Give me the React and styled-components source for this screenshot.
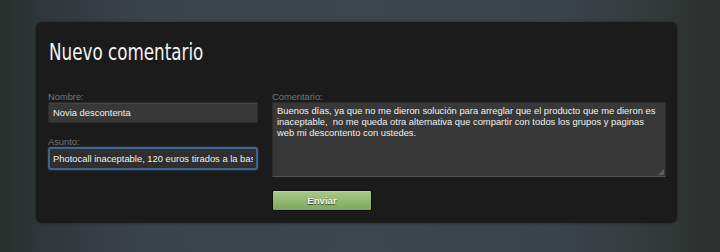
import React from 'react';
import styled, { createGlobalStyle } from 'styled-components';

const GlobalStyle = createGlobalStyle`
  html, body {
    margin: 0;
    padding: 0;
    width: 720px;
    height: 252px;
    overflow: hidden;
  }

  body {
    font-family: "Liberation Sans", Arial, sans-serif;
    background: linear-gradient(90deg, #2a2f2d 0%, #30373a 6%, #39434a 20%, #3b454c 50%, #39434a 78%, #343b3b 90%, #2b2f2d 100%);
  }
`;

const Page = styled.div`
  width: 720px;
  height: 252px;
  padding: 22px 43px 0 36px;
  box-sizing: border-box;
`;

const Panel = styled.div`
  height: 201px;
  box-sizing: border-box;
  padding: 16px 11px 12px 12px;
  background: #1b1b1b;
  border-radius: 6px;
  box-shadow: 0 0 3px rgba(0, 0, 0, 0.45);
`;

// narrow display face: condensed DejaVu squeezed to the reference's width
const Title = styled.h1`
  margin: 0 0 26px 1px;
  font-family: "Liberation Sans Narrow", "DejaVu Sans Condensed", sans-serif;
  font-weight: normal;
  font-size: 23px;
  line-height: 28px;
  color: #f4f4f4;
  white-space: nowrap;
  transform: scaleX(0.81);
  transform-origin: left center;
`;

const Form = styled.form`
  display: grid;
  grid-template-columns: 210px 394px;
  column-gap: 14px;
`;

const Column = styled.div`
  display: flex;
  flex-direction: column;
`;

const Label = styled.label`
  display: block;
  font-size: 9.3px;
  line-height: 10px;
  color: #767676;
  margin-top: ${p => p.$spaced ? '14px' : '0'};
`;

const TextInput = styled.input`
  box-sizing: border-box;
  width: 210px;
  height: ${p => p.$focused ? '23px' : '21px'};
  margin: 0;
  padding: 0 ${p => p.$focused ? '3px' : '4px'};
  font-family: "Liberation Sans", Arial, sans-serif;
  font-size: 9.4px;
  color: #f0f0f0;
  background: ${p => p.$focused ? '#2f2f2f' : '#383838'};
  border: ${p => p.$focused ? '2px solid #3d6590' : '1px solid #2b2b2b'};
  border-radius: ${p => p.$focused ? '3px' : '1px'};
  box-shadow: ${p => p.$focused ? '0 0 2px rgba(70, 120, 180, 0.6)' : 'inset 0 1px 0 #444'};
  outline: none;
`;

const TextAreaWrap = styled.div`
  position: relative;
  width: 394px;
  height: 75px;

  &::after {
    content: '';
    position: absolute;
    right: 2px;
    bottom: 2px;
    width: 0;
    height: 0;
    border-style: solid;
    border-width: 0 0 6px 6px;
    border-color: transparent transparent #5c5c5c transparent;
    pointer-events: none;
  }
`;

const TextArea = styled.textarea`
  display: block;
  box-sizing: border-box;
  width: 100%;
  height: 100%;
  margin: 0;
  padding: 2px 4px;
  font-family: "Liberation Sans", Arial, sans-serif;
  font-size: 9.4px;
  line-height: 11px;
  color: #f0f0f0;
  background: #383838;
  border: 1px solid #2b2b2b;
  border-bottom-color: #555;
  border-radius: 1px;
  resize: none;
  white-space: pre;
  overflow: hidden;
  outline: none;
`;

const Button = styled.button`
  align-self: flex-start;
  margin-top: 13px;
  width: 100px;
  height: 21px;
  padding: 0;
  font-family: "Liberation Sans", Arial, sans-serif;
  font-size: 9.6px;
  font-weight: bold;
  color: #f2f2f2;
  text-shadow: 0 1px 1px rgba(40, 60, 30, 0.9);
  background: linear-gradient(180deg, #a8c98b 0%, #93b972 50%, #7ea95d 100%);
  border: 1px solid #0e0e0e;
  border-radius: 2px;
  box-shadow: inset 0 1px 0 rgba(255, 255, 255, 0.25);
  cursor: pointer;
`;

const comment =
  'Buenos días, ya que no me dieron solución para arreglar que el producto que me dieron es\n' +
  'inaceptable,  no me queda otra alternativa que compartir con todos los grupos y paginas\n' +
  'web mi descontento con ustedes.';

const App = () => (
  <>
    <GlobalStyle />
    <Page>
      <Panel>
        <Title>Nuevo comentario</Title>
        <Form onSubmit={e => e.preventDefault()}>
          <Column>
            <Label htmlFor="nombre">Nombre:</Label>
            <TextInput id="nombre" defaultValue="Novia descontenta" />
            <Label htmlFor="asunto" $spaced>Asunto:</Label>
            <TextInput
              id="asunto"
              $focused
              defaultValue="Photocall inaceptable, 120 euros tirados a la basura"
            />
          </Column>
          <Column>
            <Label htmlFor="comentario">Comentario:</Label>
            <TextAreaWrap>
              <TextArea id="comentario" defaultValue={comment} spellCheck={false} />
            </TextAreaWrap>
            <Button type="submit">Enviar</Button>
          </Column>
        </Form>
      </Panel>
    </Page>
  </>
);

export default App;
